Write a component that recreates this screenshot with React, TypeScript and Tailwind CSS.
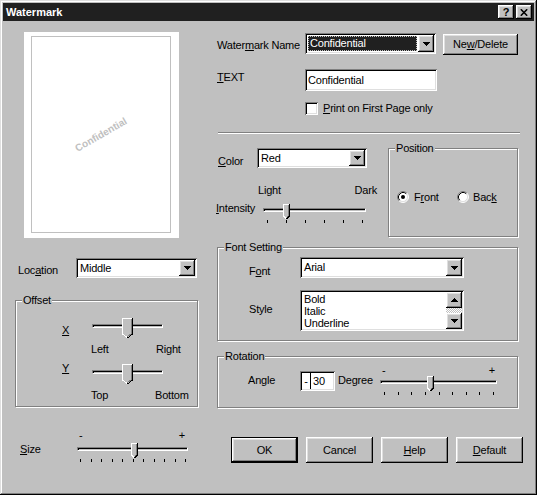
import React from "react";

const RAISED =
  "shadow-[inset_-1px_-1px_#000000,inset_1px_1px_#ffffff,inset_-2px_-2px_#808080,inset_2px_2px_#dfdfdf]";
const SUNKEN =
  "shadow-[inset_1px_1px_#808080,inset_-1px_-1px_#ffffff,inset_2px_2px_#000000,inset_-2px_-2px_#dfdfdf]";

function Arrow({ dir = "down" }: { dir?: "down" | "up" }) {
  return (
    <svg width="7" height="4" viewBox="0 0 7 4" shapeRendering="crispEdges" className="block">
      {dir === "down" ? (
        <path d="M0 0h7v1H0zM1 1h5v1H1zM2 2h3v1H2zM3 3h1v1H3z" fill="#000" />
      ) : (
        <path d="M3 0h1v1H3zM2 1h3v1H2zM1 2h5v1H1zM0 3h7v1H0z" fill="#000" />
      )}
    </svg>
  );
}

function ArrowButton({ dir = "down", className = "" }: { dir?: "down" | "up"; className?: string }) {
  return (
    <div className={`w-[16px] flex items-center justify-center bg-[#c0c0c0] ${RAISED} ${className}`}>
      <Arrow dir={dir} />
    </div>
  );
}

function Combo({
  className,
  children,
  selected,
}: {
  className: string;
  children: React.ReactNode;
  selected?: boolean;
}) {
  return (
    <div className={`flex bg-white p-[2px] ${SUNKEN} ${className}`}>
      {selected ? (
        <div className="flex-1 flex items-center pl-[1px] pr-[1px] py-[1px]">
          <div className="h-full w-full flex items-center pl-[1px] bg-[#202020] text-white border border-dotted border-[#c0c0c0]">
            {children}
          </div>
        </div>
      ) : (
        <div className="flex-1 flex items-center pl-[2px]">{children}</div>
      )}
      <ArrowButton className="h-full" />
    </div>
  );
}

function Thumb({ w, h, p }: { w: number; h: number; p: number }) {
  const r = h - p;
  const mid = Math.floor(w / 2);
  return (
    <svg width={w} height={h} viewBox={`0 0 ${w} ${h}`} shapeRendering="crispEdges" className="block">
      <polygon points={`0,0 ${w},0 ${w},${r} ${mid + 0.5},${h} 0,${r}`} fill="#c0c0c0" />
      <polyline points={`${w - 1},0.5 0.5,0.5 0.5,${r} ${mid},${h - 0.5}`} fill="none" stroke="#ffffff" />
      <polyline points={`${w - 0.5},0 ${w - 0.5},${r} ${mid + 0.5},${h}`} fill="none" stroke="#000000" />
      <polyline
        points={`${w - 1.5},1 ${w - 1.5},${r - 0.5} ${mid + 0.5},${h - 1.5}`}
        fill="none"
        stroke="#808080"
      />
    </svg>
  );
}

function Slider({
  className,
  thumbClass,
  big,
  ticks,
  tickClass = "",
}: {
  className: string;
  thumbClass: string;
  big?: boolean;
  ticks?: number;
  tickClass?: string;
}) {
  return (
    <div className={className}>
      <div className={`relative ${big ? "h-[20px]" : "h-[15px]"}`}>
        <div
          className={`absolute left-0 right-0 h-[4px] ${
            big ? "top-[6px]" : "top-[4px]"
          } border-t border-l border-[#808080] border-b border-r border-b-white border-r-white bg-[#c0c0c0] shadow-[inset_1px_1px_#000000]`}
        />
        <div className={`absolute top-0 ${thumbClass}`}>
          {big ? <Thumb w={11} h={20} p={4} /> : <Thumb w={7} h={15} p={3} />}
        </div>
      </div>
      {ticks ? (
        <div className={`flex justify-between h-[3px] mt-[1px] ${tickClass}`}>
          {Array.from({ length: ticks }).map((_, i) => (
            <div key={i} className="w-[1px] h-[3px] bg-black" />
          ))}
        </div>
      ) : null}
    </div>
  );
}

function Group({
  label,
  className,
  children,
}: {
  label: string;
  className: string;
  children?: React.ReactNode;
}) {
  return (
    <div
      className={`relative border border-[#808080] shadow-[inset_1px_1px_#ffffff,1px_1px_#ffffff] ${className}`}
    >
      <span className="absolute left-[6px] -top-[7px] px-[1px] bg-[#c0c0c0] leading-[13px]">{label}</span>
      {children}
    </div>
  );
}

function Radio({ checked }: { checked?: boolean }) {
  return (
    <svg width="12" height="12" viewBox="0 0 12 12" className="block">
      <circle cx="6" cy="6" r="5" fill="#ffffff" />
      <path d="M2.11 9.89A5.5 5.5 0 0 1 9.89 2.11" fill="none" stroke="#808080" />
      <path d="M9.89 2.11A5.5 5.5 0 0 1 2.11 9.89" fill="none" stroke="#ffffff" />
      <path d="M2.82 9.18A4.5 4.5 0 0 1 9.18 2.82" fill="none" stroke="#000000" />
      <path d="M9.18 2.82A4.5 4.5 0 0 1 2.82 9.18" fill="none" stroke="#dfdfdf" />
      {checked ? <circle cx="6" cy="6" r="2" fill="#000000" /> : null}
    </svg>
  );
}

function Btn({
  children,
  className,
  def,
}: {
  children: React.ReactNode;
  className: string;
  def?: boolean;
}) {
  if (def) {
    return (
      <div className={`border border-black ${className}`}>
        <div className={`h-full flex items-center justify-center bg-[#c0c0c0] ${RAISED}`}>{children}</div>
      </div>
    );
  }
  return (
    <div className={`flex items-center justify-center bg-[#c0c0c0] ${RAISED} ${className}`}>{children}</div>
  );
}

function U({ children }: { children: React.ReactNode }) {
  return <span className="underline underline-offset-[1px]">{children}</span>;
}

export default function App() {
  return (
    <div
      className={`w-[537px] h-[495px] bg-[#c0c0c0] p-[3px] flex flex-col text-[11px] leading-[13px] tracking-[-0.2px] text-black font-['Liberation_Sans',Arial,sans-serif] shadow-[inset_-1px_-1px_#000000,inset_1px_1px_#dfdfdf,inset_-2px_-2px_#808080,inset_2px_2px_#ffffff]`}
    >
      {/* Title bar */}
      <div className="h-[18px] bg-[#202020] flex items-center pl-[3px] pr-[2px]">
        <span className="text-white font-bold tracking-normal">Watermark</span>
        <div className="ml-auto flex gap-[2px]">
          <div className={`w-[16px] h-[14px] flex items-center justify-center bg-[#c0c0c0] font-bold ${RAISED}`}>
            ?
          </div>
          <div className={`w-[16px] h-[14px] flex items-center justify-center bg-[#c0c0c0] ${RAISED}`}>
            <svg width="8" height="7" viewBox="0 0 8 7" className="block">
              <path d="M0.8 0.3L7.2 6.7M7.2 0.3L0.8 6.7" stroke="#000" strokeWidth="1.6" />
            </svg>
          </div>
        </div>
      </div>

      {/* Body */}
      <div className="flex">
        {/* Left column */}
        <div className="w-[202px] flex flex-col">
          <div className="ml-[21px] mt-[11px] w-[155px] h-[206px] bg-white pt-[4px] pl-[7px] pr-[8px] pb-[5px]">
            <div className="h-full border border-[#c0c0c0] flex items-center justify-center">
              <span className="-rotate-[30deg] text-[#c0c0c0] font-bold text-[10px] tracking-normal">
                Confidential
              </span>
            </div>
          </div>

          <div className="flex items-start mt-[20px]">
            <span className="ml-[15px] w-[58px] mt-[6px]">
              Loc<U>a</U>tion
            </span>
            <Combo className="w-[121px] h-[20px]">Middle</Combo>
          </div>

          <Group label="Offset" className="mt-[22px] ml-[12px] w-[183px] h-[107px] flex flex-col">
            <div className="flex items-start mt-[17px]">
              <span className="ml-[46px] w-[30px] mt-[6px]">
                <U>X</U>
              </span>
              <Slider className="w-[71px]" thumbClass="left-[30px]" big />
            </div>
            <div className="flex ml-[75px] mt-[5px]">
              <span className="w-[65px]">Left</span>
              <span>Right</span>
            </div>
            <div className="flex items-start mt-[8px]">
              <span className="ml-[46px] w-[30px] -mt-[2px]">
                <U>Y</U>
              </span>
              <Slider className="w-[71px]" thumbClass="left-[30px]" big />
            </div>
            <div className="flex ml-[75px] mt-[5px]">
              <span className="w-[64px]">Top</span>
              <span>Bottom</span>
            </div>
          </Group>
        </div>

        {/* Right column */}
        <div className="flex-1 flex flex-col">
          <div className="flex items-start mt-[12px]">
            <span className="ml-[12px] w-[88px] mt-[6px]">
              Water<U>m</U>ark Name
            </span>
            <Combo className="w-[131px] h-[21px]" selected>
              Confidential
            </Combo>
            <Btn className="ml-[7px] mt-[1px] w-[75px] h-[21px]">
              <span>
                Ne<U>w</U>/Delete
              </span>
            </Btn>
          </div>

          <div className="flex items-start mt-[14px]">
            <span className="ml-[12px] w-[88px] mt-[2px]">
              <U>T</U>EXT
            </span>
            <div className={`w-[132px] h-[22px] bg-white flex items-center pl-[3px] ${SUNKEN}`}>Confidential</div>
          </div>

          <div className="flex items-center mt-[11px] ml-[100px]">
            <div className={`w-[13px] h-[13px] bg-white ${SUNKEN}`} />
            <span className="ml-[5px]">
              <U>P</U>rint on First Page only
            </span>
          </div>

          <div className="mt-[17px] ml-[13px] w-[302px] h-[2px] border-t border-[#808080] border-b border-b-white" />

          <div className="flex items-start mt-[14px]">
            <div className="w-[183px] flex flex-col">
              <div className="flex items-start">
                <span className="ml-[13px] w-[39px] mt-[7px]">
                  <U>C</U>olor
                </span>
                <Combo className="w-[110px] h-[20px]">Red</Combo>
              </div>
              <div className="flex justify-between ml-[53px] w-[119px] mt-[16px]">
                <span>Light</span>
                <span>Dark</span>
              </div>
              <div className="flex items-start mt-[7px]">
                <span className="ml-[11px] w-[47px] -mt-[2px]">
                  <U>I</U>ntensity
                </span>
                <Slider
                  className="w-[103px]"
                  thumbClass="left-[20px]"
                  ticks={6}
                  tickClass="pl-[4px] pr-[3px]"
                />
              </div>
            </div>

            <Group label="Position" className="w-[130px] h-[89px]">
              <div className="flex items-center mt-[42px] h-[12px]">
                <div className="ml-[8px]">
                  <Radio checked />
                </div>
                <span className="ml-[5px] w-[26px]">
                  F<U>r</U>ont
                </span>
                <div className="ml-[17px]">
                  <Radio />
                </div>
                <span className="ml-[4px]">
                  Bac<U>k</U>
                </span>
              </div>
            </Group>
          </div>

          <Group label="Font Setting" className="mt-[10px] ml-[12px] w-[301px] h-[94px] flex flex-col">
            <div className="flex items-start mt-[9px]">
              <span className="ml-[31px] w-[51px] mt-[8px]">
                F<U>o</U>nt
              </span>
              <Combo className="w-[164px] h-[21px]">Arial</Combo>
            </div>
            <div className="flex items-start mt-[12px]">
              <span className="ml-[31px] w-[51px] mt-[13px]">Style</span>
              <div className={`w-[164px] h-[41px] bg-white p-[2px] flex ${SUNKEN}`}>
                <div className="flex-1 flex flex-col pl-[2px] pt-[1px] leading-[12px] overflow-hidden">
                  <span>Bold</span>
                  <span>Italic</span>
                  <span>Underline</span>
                </div>
                <div className="w-[16px] flex flex-col">
                  <ArrowButton dir="up" className="h-[16px]" />
                  <div className="flex-1 bg-[repeating-conic-gradient(#c0c0c0_0_25%,#ffffff_0_50%)] bg-[length:2px_2px]" />
                  <ArrowButton className="h-[16px]" />
                </div>
              </div>
            </div>
          </Group>

          <Group label="Rotation" className="mt-[15px] ml-[12px] w-[301px] h-[52px]">
            <div className="flex items-start">
              <span className="ml-[30px] w-[52px] mt-[17px]">Angle</span>
              <div className={`mt-[14px] w-[35px] h-[20px] bg-white p-[2px] flex ${SUNKEN}`}>
                <div className="w-[9px] h-full flex items-center justify-center border-r border-black">-</div>
                <div className="flex-1 flex items-center pl-[2px]">30</div>
              </div>
              <span className="ml-[3px] w-[42px] mt-[17px]">Degree</span>
              <div className="mt-[9px] w-[117px] flex flex-col">
                <div className="h-[10px] flex justify-between px-[2px] leading-[8px]">
                  <span>-</span>
                  <span>+</span>
                </div>
                <Slider className="w-[117px]" thumbClass="left-[47px]" ticks={9} tickClass="pl-[4px] pr-[3px]" />
              </div>
            </div>
          </Group>
        </div>
      </div>

      {/* Bottom row */}
      <div className="flex items-start mt-[23px]">
        <span className="ml-[17px] w-[57px] mt-[12px]">
          <U>S</U>ize
        </span>
        <div className="w-[111px] flex flex-col">
          <div className="h-[12px] flex justify-between pl-[2px] pr-[3px] leading-[8px]">
            <span>-</span>
            <span>+</span>
          </div>
          <Slider className="w-[111px]" thumbClass="left-[54px]" ticks={11} tickClass="pl-[3px] pr-[2px]" />
        </div>
        <div className="ml-[43px] mt-[6px] flex gap-[8px]">
          <Btn def className="w-[67px] h-[26px]">
            OK
          </Btn>
          <Btn className="w-[67px] h-[26px]">Cancel</Btn>
          <Btn className="w-[67px] h-[26px]">
            <span>
              <U>H</U>elp
            </span>
          </Btn>
          <Btn className="w-[67px] h-[26px]">
            <span>
              <U>D</U>efault
            </span>
          </Btn>
        </div>
      </div>
    </div>
  );
}
